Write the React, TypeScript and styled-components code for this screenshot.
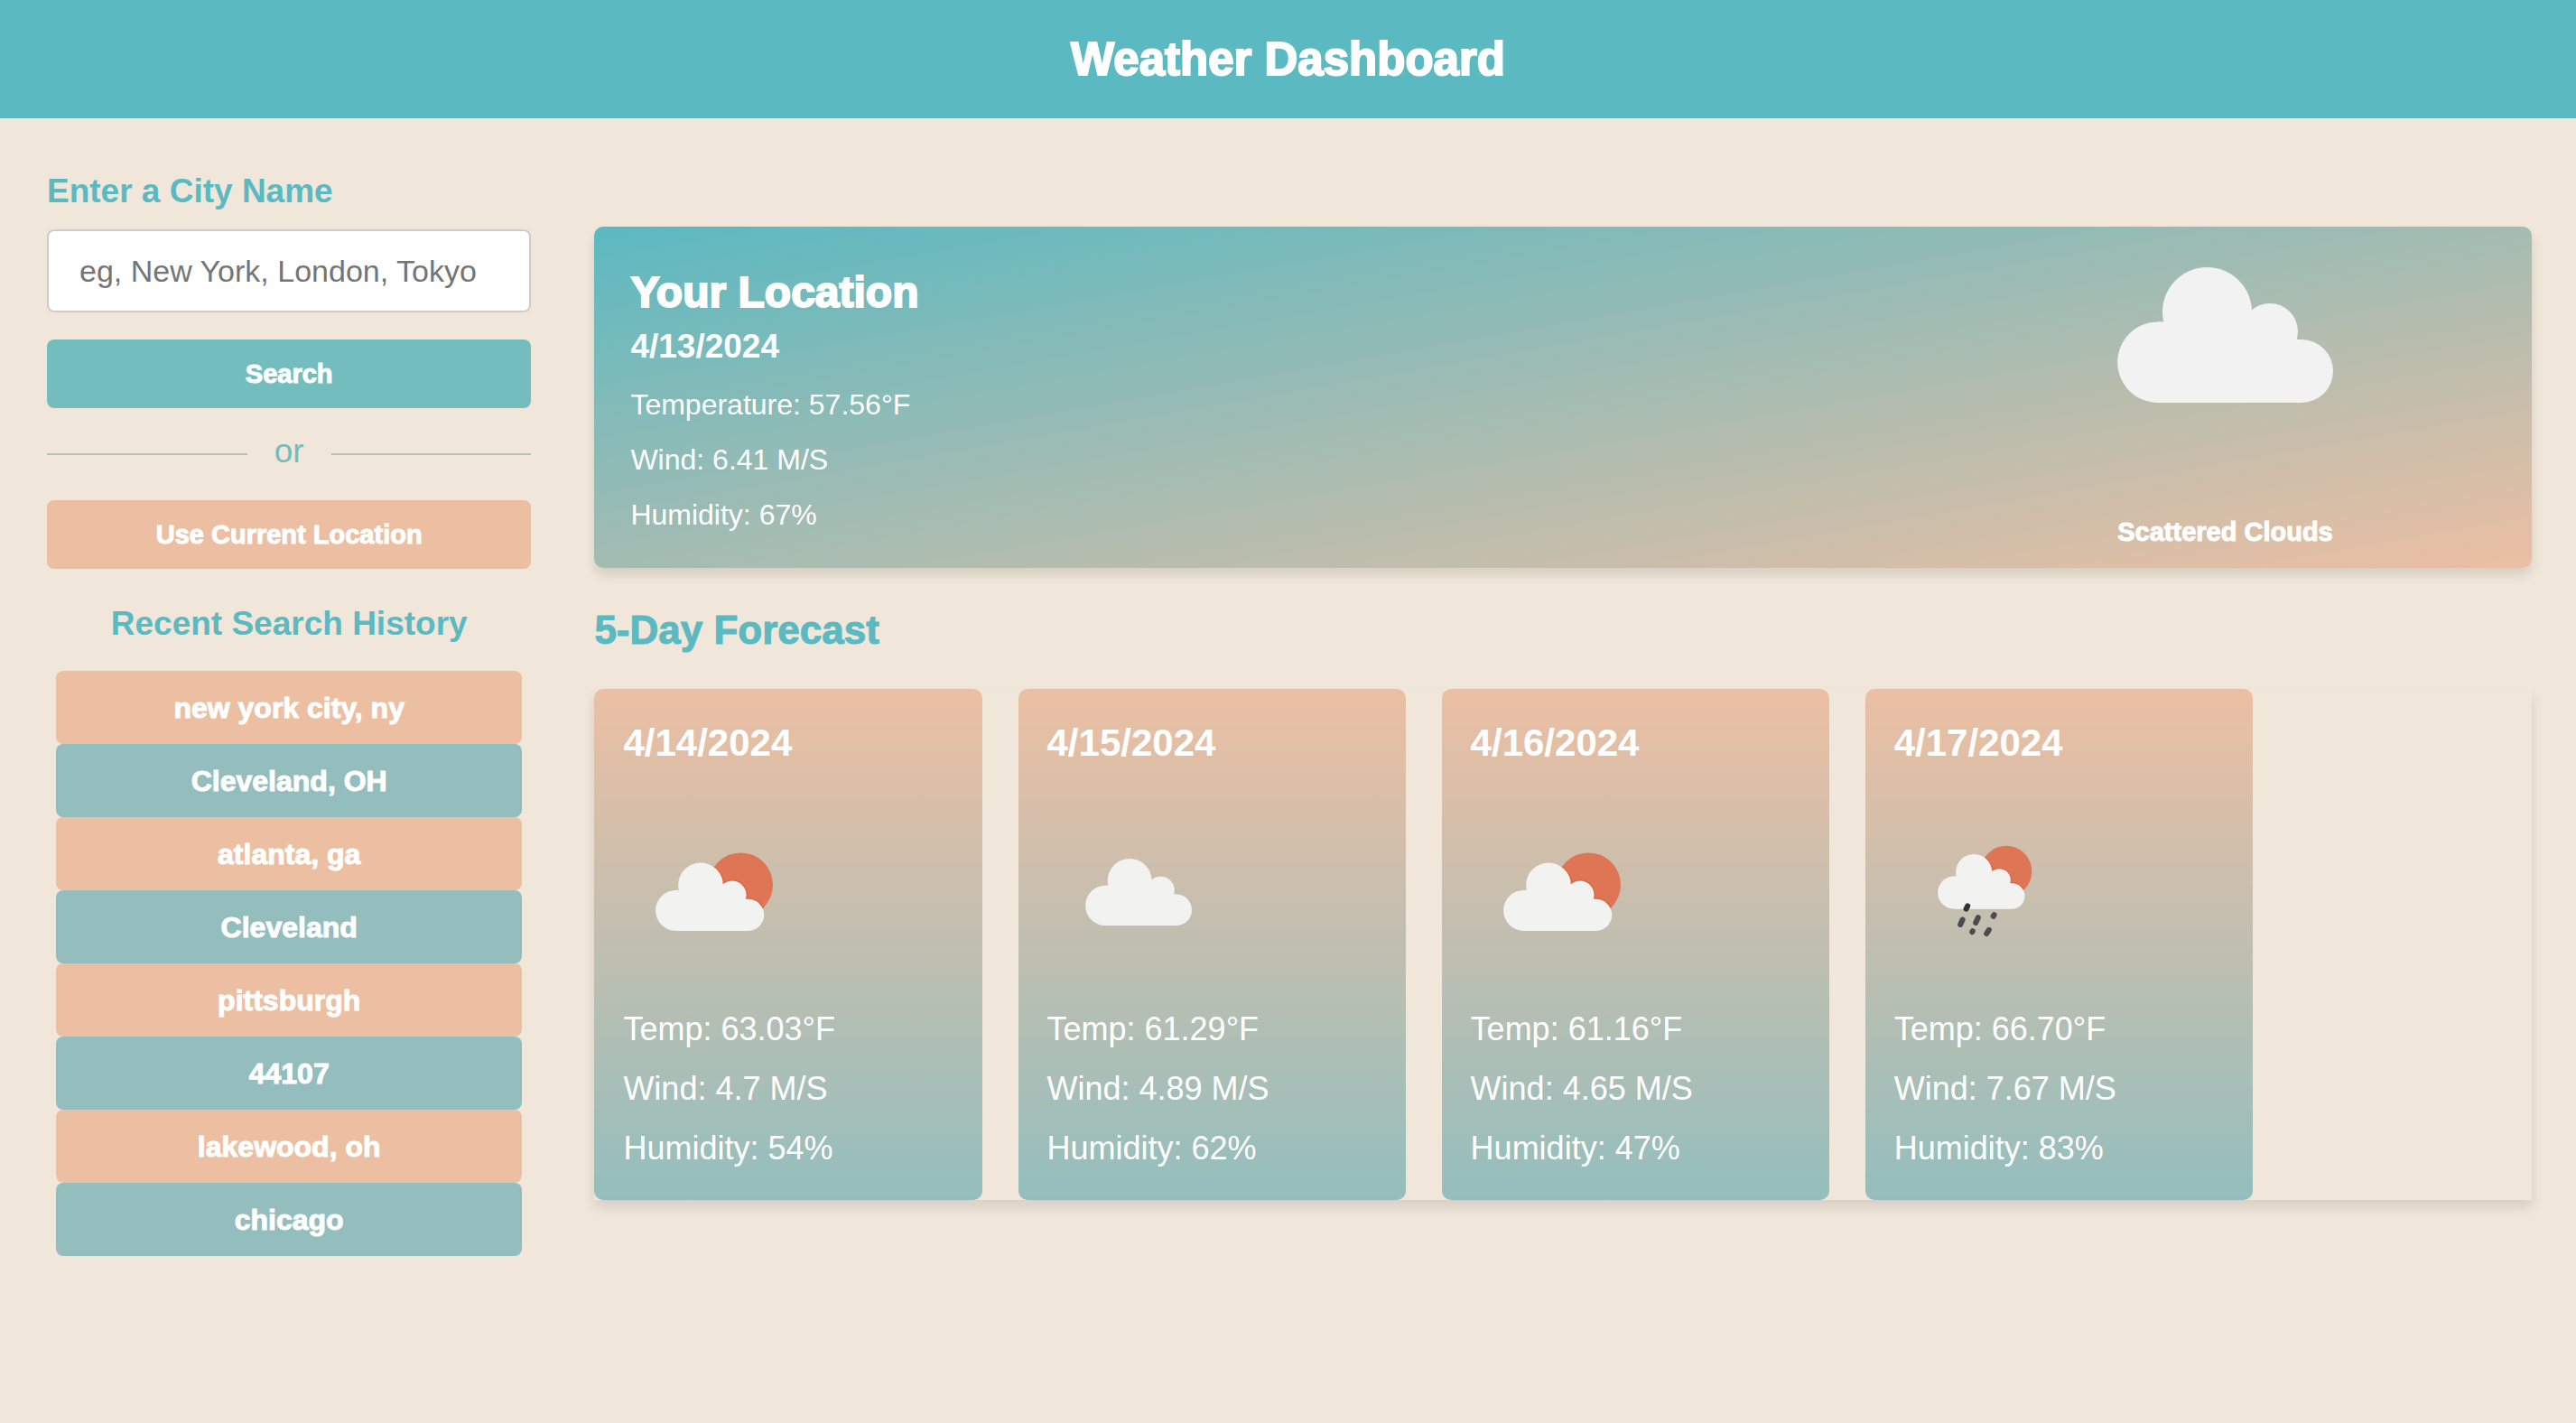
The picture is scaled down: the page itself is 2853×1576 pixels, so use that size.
import React, { useId } from "react";
import styled, { createGlobalStyle, css } from "styled-components";

const color = {
  teal: "#5bb9c1",
  softTeal: "#74bdbf",
  mutedTeal: "#94bebd",
  peach: "#ecbfa3",
  sand: "#f0e6da",
  line: "#bbbcbd",
  white: "#ffffff",
};

const shadow = "0 8px 12px rgba(0, 0, 0, 0.1)";

const heavy = css`
  font-weight: 700;
  -webkit-text-stroke: 1px currentColor;
`;

const GlobalStyle = createGlobalStyle`
  * { box-sizing: border-box; }
  body {
    margin: 0;
    background: ${color.sand};
    font-family: "Liberation Sans", Arial, sans-serif;
  }
  h1, h2, h3, p, ul, form { margin: 0; padding: 0; }
  button, input { font-family: inherit; }
`;

const Header = styled.header`
  padding: 36px 24px;
  background: ${color.teal};
  color: ${color.white};
  text-align: center;
`;

const PageTitle = styled.h1`
  ${heavy}
  -webkit-text-stroke-width: 2px;
  font-size: 51px;
  line-height: 59px;
`;

const Layout = styled.div`
  display: grid;
  grid-template-columns: minmax(0, 1fr) minmax(0, 4fr);
  column-gap: 70px;
  align-items: start;
  padding: 60px 49px 60px 52px;
`;

const Sidebar = styled.aside`
  display: flex;
  flex-direction: column;
  gap: 40px;
`;

const SearchForm = styled.form`
  display: flex;
  flex-direction: column;
  gap: 30px;
`;

const Field = styled.div`
  display: flex;
  flex-direction: column;
  gap: 21px;
`;

const FieldLabel = styled.label`
  color: ${color.teal};
  font-size: 37px;
  font-weight: 700;
  line-height: 42px;
`;

const CityInput = styled.input`
  width: 100%;
  height: 92px;
  padding: 0 34px;
  border: 2px solid #cccccc;
  border-radius: 8px;
  background: ${color.white};
  color: #333333;
  font-size: 34px;

  &::placeholder {
    color: #757575;
    opacity: 1;
  }
`;

const ActionButton = styled.button<{ $tone: string }>`
  ${heavy}
  height: 76px;
  border: 0;
  border-radius: 8px;
  background: ${(p) => p.$tone};
  color: ${color.white};
  font-size: 29px;
  cursor: pointer;
`;

const Divider = styled.div`
  display: flex;
  align-items: center;
  gap: 30px;
  color: ${color.softTeal};
  font-size: 37px;
  line-height: 36px;

  &::before,
  &::after {
    content: "";
    flex: 1;
    height: 2px;
    background: ${color.line};
  }
`;

const DividerText = styled.span`
  padding-bottom: 6px;
`;

const HistoryHeading = styled.h3`
  margin-bottom: 31px;
  color: ${color.teal};
  font-size: 37px;
  line-height: 42px;
  text-align: center;
`;

const HistoryList = styled.ul`
  display: flex;
  flex-direction: column;
  padding: 0 10px;
  list-style: none;
`;

const HistoryButton = styled.button<{ $tone: string }>`
  ${heavy}
  display: block;
  width: 100%;
  height: 81px;
  padding: 2px 0 0;
  border: 0;
  border-radius: 8px;
  background: ${(p) => p.$tone};
  color: ${color.white};
  font-size: 32px;
  cursor: pointer;
`;

const Main = styled.main`
  padding-top: 60px;
`;

const CurrentCard = styled.section`
  display: flex;
  padding: 40px 40px 28px;
  border-radius: 10px;
  background: linear-gradient(to bottom right, ${color.teal}, ${color.peach});
  box-shadow: ${shadow};
  color: ${color.white};
`;

const CurrentDetails = styled.div`
  flex: 1;
`;

const Place = styled.h2`
  ${heavy}
  -webkit-text-stroke-width: 2px;
  font-size: 48px;
  line-height: 66px;
`;

const CurrentDate = styled.h3`
  margin-bottom: 7px;
  font-size: 37px;
  line-height: 54px;
`;

const CurrentStat = styled.p`
  font-size: 32px;
  line-height: 61px;
`;

const Conditions = styled.div`
  display: flex;
  flex: 0 0 29%;
  flex-direction: column;
  align-items: center;
  justify-content: space-between;
  padding-top: 5px;
`;

const ConditionText = styled.p`
  ${heavy}
  font-size: 29px;
  line-height: 24px;
`;

const ForecastHeading = styled.h2`
  ${heavy}
  margin: 44px 0 40px;
  color: ${color.teal};
  font-size: 44px;
  line-height: 50px;
`;

const ForecastRow = styled.div`
  display: flex;
  gap: 40px;
  box-shadow: ${shadow};
`;

const ForecastCard = styled.article`
  flex: 0 0 20%;
  padding: 35px 32px 24px;
  border-radius: 10px;
  background: linear-gradient(${color.peach}, ${color.mutedTeal});
  color: ${color.white};
`;

const ForecastDate = styled.h3`
  font-size: 42px;
  line-height: 50px;
`;

const IconArt = styled.svg`
  display: block;
`;

const ForecastArt = styled(IconArt)`
  width: 200px;
  height: 200px;
  margin: 42px 0 17px;
`;

const ForecastStat = styled.p`
  font-size: 36px;
  line-height: 66px;
`;

function CloudShape() {
  return (
    <>
      <circle cx="45" cy="105.2" r="44.8" />
      <circle cx="99.5" cy="49.5" r="49.5" />
      <circle cx="169" cy="71" r="31" />
      <circle cx="204" cy="115" r="35" />
      <rect x="45" y="80" width="159" height="70" />
      <path d="M45 60.4H51L195 60V150H45Z" />
    </>
  );
}

function Sun({ cx, cy, r, cloud }: { cx: number; cy: number; r: number; cloud: string }) {
  const clip = useId();
  return (
    <>
      <clipPath id={clip}>
        <circle cx={cx} cy={cy} r={r} />
      </clipPath>
      <circle cx={cx} cy={cy} r={r} fill="#de7656" />
      <g clipPath={`url(#${clip})`}>
        <g transform={cloud} fill="#e0603a" stroke="#e0603a" strokeWidth="5">
          <CloudShape />
        </g>
      </g>
    </>
  );
}

type Sky = "cloud" | "partly" | "rain";

const skyLabel: Record<Sky, string> = {
  cloud: "Scattered clouds",
  partly: "Few clouds",
  rain: "Rain",
};

function SkyIcon({ sky }: { sky: Sky }) {
  const place = {
    cloud: "translate(42 61) scale(0.494)",
    partly: "translate(36 65.5) scale(0.503)",
    rain: "translate(48 56) scale(0.404)",
  }[sky];
  return (
    <ForecastArt viewBox="0 0 200 200" role="img" aria-label={skyLabel[sky]}>
      {sky === "partly" && <Sun cx={130.4} cy={90} r={35.6} cloud={place} />}
      {sky === "rain" && <Sun cx={124} cy={75} r={28.3} cloud={place} />}
      <g transform={place} fill="#f2f2f1">
        <CloudShape />
      </g>
      {sky === "rain" && (
        <g stroke="#4b4b4d" strokeWidth="6" strokeLinecap="round">
          <path d="M81.2 113.5L79.6 116.6" stroke="#303336" />
          <path d="M75.6 128.5L73.2 134" />
          <path d="M92.8 126.2L90.2 132" />
          <path d="M110.6 123.2L109.6 124.8" />
          <path d="M86.8 141.2L86.3 142.2" />
          <path d="M104.8 139.8L102.2 144" />
        </g>
      )}
    </ForecastArt>
  );
}

const history = [
  "new york city, ny",
  "Cleveland, OH",
  "atlanta, ga",
  "Cleveland",
  "pittsburgh",
  "44107",
  "lakewood, oh",
  "chicago",
];

const forecast: { date: string; sky: Sky; temp: string; wind: string; humidity: string }[] = [
  { date: "4/14/2024", sky: "partly", temp: "63.03", wind: "4.7", humidity: "54" },
  { date: "4/15/2024", sky: "cloud", temp: "61.29", wind: "4.89", humidity: "62" },
  { date: "4/16/2024", sky: "partly", temp: "61.16", wind: "4.65", humidity: "47" },
  { date: "4/17/2024", sky: "rain", temp: "66.70", wind: "7.67", humidity: "83" },
];

export default function App() {
  return (
    <>
      <GlobalStyle />
      <Header>
        <PageTitle>Weather Dashboard</PageTitle>
      </Header>
      <Layout>
        <Sidebar>
          <SearchForm onSubmit={(e) => e.preventDefault()}>
            <Field>
              <FieldLabel htmlFor="city">Enter a City Name</FieldLabel>
              <CityInput id="city" type="text" placeholder="eg, New York, London, Tokyo" />
            </Field>
            <ActionButton type="submit" $tone={color.softTeal}>
              Search
            </ActionButton>
            <Divider>
              <DividerText>or</DividerText>
            </Divider>
            <ActionButton type="button" $tone={color.peach}>
              Use Current Location
            </ActionButton>
          </SearchForm>
          <section>
            <HistoryHeading>Recent Search History</HistoryHeading>
            <HistoryList>
              {history.map((city, i) => (
                <li key={city}>
                  <HistoryButton type="button" $tone={i % 2 ? color.mutedTeal : color.peach}>
                    {city}
                  </HistoryButton>
                </li>
              ))}
            </HistoryList>
          </section>
        </Sidebar>
        <Main>
          <CurrentCard>
            <CurrentDetails>
              <Place>Your Location</Place>
              <CurrentDate>4/13/2024</CurrentDate>
              <CurrentStat>Temperature: 57.56°F</CurrentStat>
              <CurrentStat>Wind: 6.41 M/S</CurrentStat>
              <CurrentStat>Humidity: 67%</CurrentStat>
            </CurrentDetails>
            <Conditions>
              <IconArt width="239" height="150" viewBox="0 0 239 150" fill="#f2f2f2" aria-hidden="true">
                <CloudShape />
              </IconArt>
              <ConditionText>Scattered Clouds</ConditionText>
            </Conditions>
          </CurrentCard>
          <ForecastHeading>5-Day Forecast</ForecastHeading>
          <ForecastRow>
            {forecast.map((day) => (
              <ForecastCard key={day.date}>
                <ForecastDate>{day.date}</ForecastDate>
                <SkyIcon sky={day.sky} />
                <ForecastStat>Temp: {day.temp}°F</ForecastStat>
                <ForecastStat>Wind: {day.wind} M/S</ForecastStat>
                <ForecastStat>Humidity: {day.humidity}%</ForecastStat>
              </ForecastCard>
            ))}
          </ForecastRow>
        </Main>
      </Layout>
    </>
  );
}
